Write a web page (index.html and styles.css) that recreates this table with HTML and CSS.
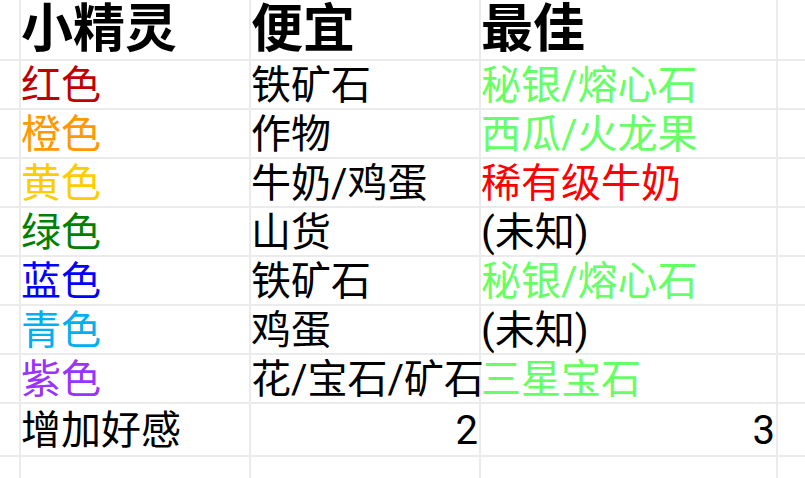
FILE: index.html
```html
<!DOCTYPE html>
<html lang="zh-CN">
<head>
<meta charset="utf-8">
<title>小精灵</title>
<link rel="stylesheet" href="styles.css">
</head>
<body>
<div class="sheet">
  <div class="c"></div><div class="c h">小精灵</div><div class="c h">便宜</div><div class="c h">最佳</div><div class="c"></div>
  <div class="c"></div><div class="c red">红色</div><div class="c">铁矿石</div><div class="c lg">秘银/熔心石</div><div class="c"></div>
  <div class="c"></div><div class="c orange">橙色</div><div class="c">作物</div><div class="c lg">西瓜/火龙果</div><div class="c"></div>
  <div class="c"></div><div class="c yellow">黄色</div><div class="c">牛奶/鸡蛋</div><div class="c bright">稀有级牛奶</div><div class="c"></div>
  <div class="c"></div><div class="c green">绿色</div><div class="c">山货</div><div class="c">(未知)</div><div class="c"></div>
  <div class="c"></div><div class="c blue">蓝色</div><div class="c">铁矿石</div><div class="c lg">秘银/熔心石</div><div class="c"></div>
  <div class="c"></div><div class="c cyan">青色</div><div class="c">鸡蛋</div><div class="c">(未知)</div><div class="c"></div>
  <div class="c"></div><div class="c purple">紫色</div><div class="c">花/宝石/矿石</div><div class="c lg">三星宝石</div><div class="c"></div>
  <div class="c"></div><div class="c">增加好感</div><div class="c num">2</div><div class="c num">3</div><div class="c"></div>
  <div class="c"></div><div class="c"></div><div class="c"></div><div class="c"></div><div class="c"></div>
</div>
</body>
</html>
```

FILE: styles.css
```css
html, body {
  margin: 0;
  padding: 0;
  background: #ffffff;
  overflow: hidden;
}
.sheet {
  display: grid;
  grid-template-columns: 21px 230px 230px 297px 40px;
  grid-template-rows: 61px repeat(7, 49px) 53px 30px;
  width: 805px;
  height: 478px;
  font-family: Roboto, "Noto Sans CJK SC", sans-serif;
  font-size: 40px;
  color: #000000;
}
.c {
  border-right: 2px solid #ebebeb;
  border-bottom: 2px solid #ebebeb;
  padding-left: 0;
  padding-top: 2px;
  display: flex;
  align-items: center;
  white-space: nowrap;
  line-height: 1;
  min-width: 0;
}
.h {
  font-size: 52px;
  font-weight: 700;
  padding-top: 0;
}
.num {
  justify-content: flex-end;
  padding-right: 1px;
}
.red { color: #c00000; }
.orange { color: #ff9900; }
.yellow { color: #ffcc00; }
.green { color: #008000; }
.blue { color: #0000ff; }
.cyan { color: #00b0f0; }
.purple { color: #9933ff; }
.lg { color: #66ff66; }
.bright { color: #ff0000; }
```
